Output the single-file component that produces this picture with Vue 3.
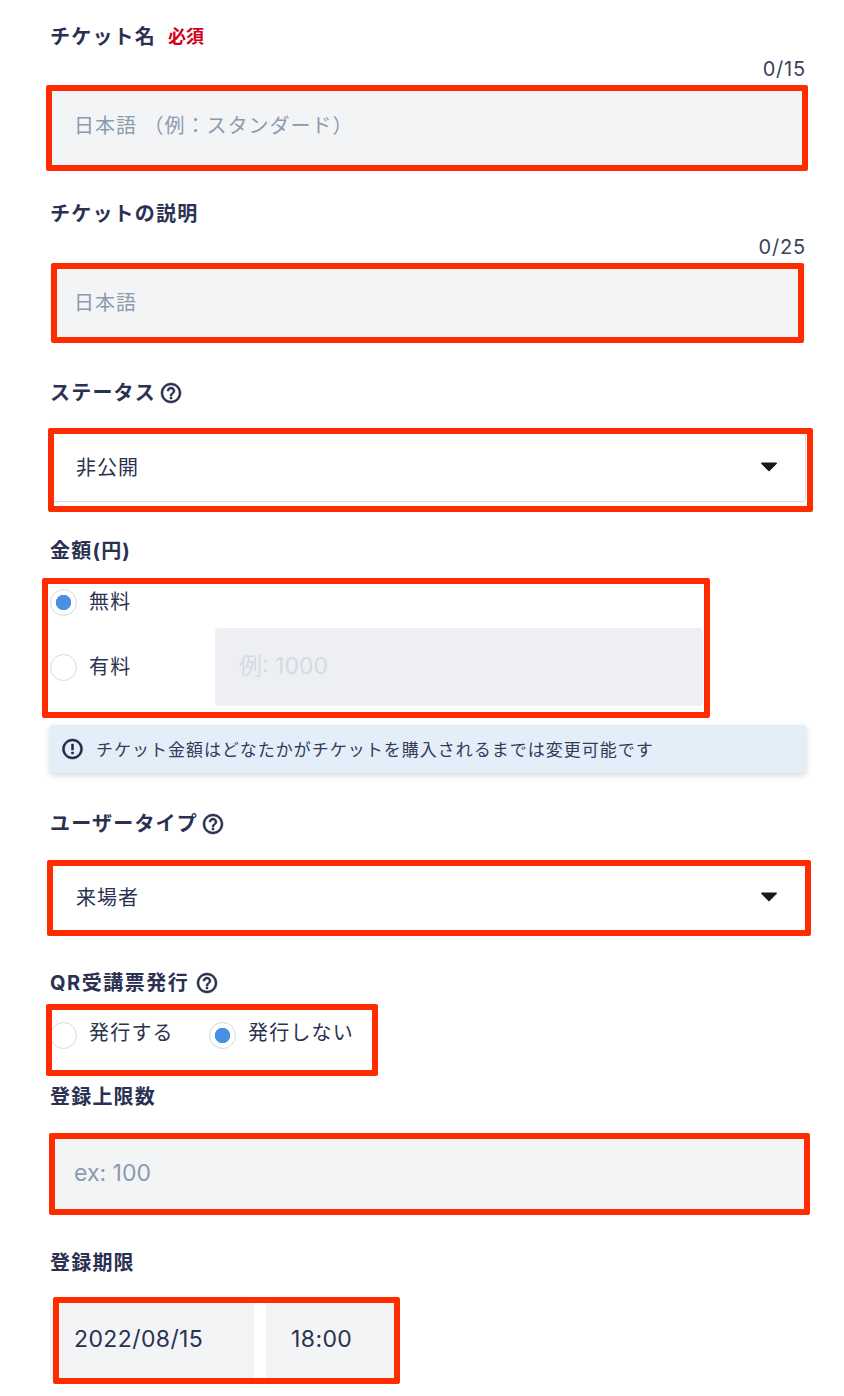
<script setup>
const helpPath = 'M11 18h2v-2h-2v2zm1-16C6.48 2 2 6.48 2 12s4.48 10 10 10 10-4.48 10-10S17.52 2 12 2zm0 18c-4.41 0-8-3.59-8-8s3.59-8 8-8 8 3.59 8 8-3.59 8-8 8zm0-14c-2.21 0-4 1.79-4 4h2c0-1.1.9-2 2-2s2 .9 2 2c0 2-3 1.75-3 5h2c0-2.25 3-2.5 3-5 0-2.21-1.79-4-4-4z'
const alertPath = 'M11 15h2v2h-2zm0-8h2v6h-2zm.99-5C6.47 2 2 6.48 2 12s4.47 10 9.99 10C17.52 22 22 17.52 22 12S17.52 2 11.99 2zM12 20c-4.42 0-8-3.58-8-8s3.58-8 8-8 8 3.58 8 8-3.58 8-8 8z'
</script>

<template>
  <form class="form">
    <section class="field f-name">
      <div class="label">チケット名<span class="req">必須</span></div>
      <div class="count">0/15</div>
      <div class="control">
        <input class="input" placeholder="日本語 （例：スタンダード）" />
        <i class="frame frame-name"></i>
      </div>
    </section>

    <section class="field f-desc">
      <div class="label">チケットの説明</div>
      <div class="count">0/25</div>
      <div class="control">
        <input class="input" placeholder="日本語" />
        <i class="frame frame-desc"></i>
      </div>
    </section>

    <section class="field f-status">
      <div class="label">ステータス<svg class="help" viewBox="0 0 24 24"><path :d="helpPath" /></svg></div>
      <div class="control">
        <div class="select">
          <span class="select-text">非公開</span>
          <svg class="caret" viewBox="0 0 16 10"><path d="M0 1.5 Q0 .5 1 .5 H15 Q16 .5 16 1.5 L8.6 9 Q8 9.6 7.4 9 Z" /></svg>
        </div>
        <i class="frame frame-status"></i>
      </div>
    </section>

    <section class="field f-price">
      <div class="label">金額(円)</div>
      <div class="control price-box">
        <div class="radio-row free">
          <span class="radio on"></span><span class="radio-text">無料</span>
        </div>
        <div class="radio-row paid">
          <span class="radio"></span><span class="radio-text paid-text">有料</span>
          <input class="input num price-input" placeholder="例: 1000" disabled />
        </div>
        <i class="frame frame-price"></i>
      </div>
      <div class="notice">
        <svg class="notice-icon" viewBox="0 0 24 24"><path :d="alertPath" /></svg>
        <span class="notice-text">チケット金額はどなたかがチケットを購入されるまでは変更可能です</span>
      </div>
    </section>

    <section class="field f-user">
      <div class="label">ユーザータイプ<svg class="help" viewBox="0 0 24 24"><path :d="helpPath" /></svg></div>
      <div class="control">
        <div class="select plain">
          <span class="select-text">来場者</span>
          <svg class="caret" viewBox="0 0 16 10"><path d="M0 1.5 Q0 .5 1 .5 H15 Q16 .5 16 1.5 L8.6 9 Q8 9.6 7.4 9 Z" /></svg>
        </div>
        <i class="frame frame-user"></i>
      </div>
    </section>

    <section class="field f-qr">
      <div class="label">QR受講票発行<svg class="help" viewBox="0 0 24 24"><path :d="helpPath" /></svg></div>
      <div class="control qr-box">
        <div class="radio-row qr-a"><span class="radio"></span><span class="radio-text">発行する</span></div>
        <div class="radio-row qr-b"><span class="radio on"></span><span class="radio-text">発行しない</span></div>
        <i class="frame frame-qr"></i>
      </div>
    </section>

    <section class="field f-limit">
      <div class="label">登録上限数</div>
      <div class="control">
        <input class="input num" placeholder="ex: 100" />
        <i class="frame frame-limit"></i>
      </div>
    </section>

    <section class="field f-deadline">
      <div class="label">登録期限</div>
      <div class="control date-box">
        <input class="input num date" value="2022/08/15" />
        <input class="input num time" value="18:00" />
        <i class="frame frame-date"></i>
      </div>
    </section>
  </form>
</template>

<style>
html, body { margin: 0; background: #fff; }
</style>

<style scoped>
.form {
  box-sizing: border-box;
  width: 844px;
  height: 1396px;
  padding: 23px 38px 0 50px;
  overflow: hidden;
  font-family: Inter, "Noto Sans CJK JP", sans-serif;
  color: #2b3151;
  font-size: 20px;
}
.field { display: flex; flex-direction: column; }
.label {
  display: flex;
  align-items: center;
  height: 28px;
  font-size: 20px;
  font-weight: 700;
  letter-spacing: 1.2px;
  line-height: 28px;
}
.req {
  margin-left: 12px;
  color: #d0021b;
  font-size: 18px;
  letter-spacing: 0;
}
.help { width: 24px; height: 24px; margin-left: 3px; fill: #2b3151; stroke: #2b3151; stroke-width: .5; }
.count {
  height: 24px;
  margin-top: 6px;
  text-align: right;
  font-size: 20px;
  letter-spacing: .8px;
  line-height: 24px;
  color: #3c425e;
}
.control { position: relative; }
.frame {
  position: absolute;
  box-sizing: border-box;
  border: 6px solid #ff2c00;
  border-radius: 2px;
  pointer-events: none;
}
.input {
  display: block;
  box-sizing: border-box;
  width: 100%;
  height: 78px;
  padding: 0 24px;
  border: 0;
  border-radius: 4px;
  outline: 0;
  background: #f3f4f6;
  font: inherit;
  letter-spacing: 1px;
  color: #2b3151;
}
.input.num { font-size: 23px; letter-spacing: .4px; padding-bottom: 2px; }
.input::placeholder { color: #8a9bb0; opacity: 1; }
.input.num::placeholder { letter-spacing: 0; }
.select {
  box-sizing: border-box;
  display: flex;
  align-items: center;
  justify-content: space-between;
  height: 70px;
  padding: 0 28px 0 25px;
  border: 1px solid #d5d9e0;
  border-radius: 4px;
  letter-spacing: 1px;
}
.select.plain { border-color: #e6e8ec; }
.select-text { transform: translateY(-1px); }
.caret { width: 16px; height: 10px; fill: #1a1a1a; }

.f-name .control { margin-top: 6px; }
.frame-name { left: -4px; right: -2px; top: -2px; bottom: -6px; }

.f-desc { margin-top: 35px; }
.f-desc .count { margin-top: 7px; }
.f-desc .control { margin-top: 4px; }
.f-desc .input { padding-top: 1px; }
.frame-desc { left: 1px; right: 2px; top: 0; bottom: -2px; }

.f-status { margin-top: 38px; }
.f-status .control { margin-top: 25px; }
.frame-status { left: -2px; right: -7px; top: -4px; bottom: -10px; }

.f-price { margin-top: 35px; }
.price-box { height: 119px; margin-top: 22px; }
.radio-row { display: flex; align-items: center; line-height: 30px; }
.radio {
  box-sizing: border-box;
  display: block;
  flex: none;
  width: 27px;
  height: 27px;
  margin-right: 12px;
  border: 1px solid #d3dae2;
  border-radius: 50%;
  background: #fff;
}
.radio.on { background: radial-gradient(circle, #4a90e2 0 7.4px, #fff 8px); }
.radio-text { letter-spacing: 1.2px; }
.free { height: 30px; }
.paid { margin-top: 11px; }
.paid-text { width: 126px; flex: none; }
.price-input {
  width: 488px;
  flex: none;
  background: #edeff3;
}
.price-input::placeholder { color: #d3dbe3; }
.frame-price { left: -8px; top: -9px; width: 668px; height: 140px; }
.notice {
  display: flex;
  align-items: center;
  height: 48px;
  margin-top: 19px;
  padding-left: 11px;
  background: #e3eef8;
  border-radius: 2px;
  box-shadow: 0 2px 6px rgba(60, 70, 90, .22);
  font-size: 17px;
  letter-spacing: 1px;
  color: #343a58;
}
.notice-text { transform: translateY(-1px); }
.notice-icon { width: 24px; height: 24px; margin-right: 11px; fill: #1f2947; stroke: #1f2947; stroke-width: .5; flex: none; transform: translateX(-.5px); }

.f-user { margin-top: 37px; }
.f-user .control { margin-top: 24px; }
.frame-user { left: -3px; right: -5px; top: -2px; bottom: -4px; }

.f-qr { margin-top: 37px; }
.f-qr .label { letter-spacing: 1.5px; }
.f-qr .help { margin-left: 6px; }
.qr-box { display: flex; margin-top: 23px; height: 30px; }
.qr-a, .qr-b { height: 30px; }
.qr-a { width: 159px; }
.qr-box .radio-text { transform: translateY(-2px); }
.frame-qr { left: -4px; top: -16px; width: 332px; height: 72px; }

.f-limit { margin-top: 33px; }
.f-limit .control { margin-top: 24px; }
.frame-limit { left: -1px; right: -4px; top: -2px; bottom: -2px; }

.f-deadline { margin-top: 36px; }
.date-box { display: flex; margin-top: 24px; }
.date { flex: none; width: 204px; border-radius: 4px 0 0 4px; }
.time { flex: none; width: 128px; margin-left: 12px; padding: 0 0 2px 25px !important; border-radius: 0; }
.frame-date { left: 3px; top: -4px; width: 347px; height: 87px; }
</style>
